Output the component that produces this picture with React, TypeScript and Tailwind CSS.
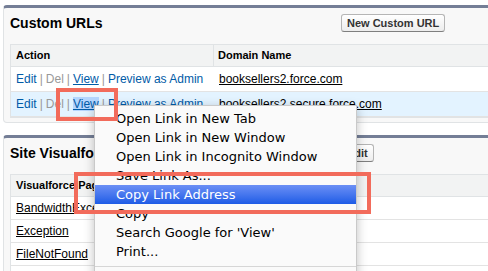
import React from 'react'

const linkCls = 'text-[#015ba7]'

function Pipe() {
  return <span className="text-[#999] px-[3px]">|</span>
}

function ActionLinks({ selected = false }: { selected?: boolean }) {
  return (
    <span className="whitespace-nowrap">
      <span className={linkCls}>Edit</span>
      <Pipe />
      <span className="text-[#999]">Del</span>
      <Pipe />
      <span className={`${linkCls} underline ${selected ? 'bg-[#b4d5fe]' : ''}`}>View</span>
      <Pipe />
      <span className={linkCls}>Preview as Admin</span>
    </span>
  )
}

function Button({ label }: { label: string }) {
  return (
    <button className="h-[18px] px-[5px] rounded-[3px] border border-[#b5b5b5] border-b-[#7f7f7f] bg-gradient-to-b from-white to-[#ededed] text-[11px] font-bold text-[#333] leading-none">
      {label}
    </button>
  )
}

function Panel({ title, button, children }: { title: string; button: string; children: React.ReactNode }) {
  return (
    <div className="ml-[3px] w-[560px] rounded-[4px] border border-[#e0e3e5] border-t-[3px] border-t-[#747e96] bg-[#f8f8f8] px-[6px] pb-[4px]">
      <div className="flex items-center h-[36px] pb-[6px]">
        <div className="w-[331px] text-[14px] font-bold text-black">{title}</div>
        <Button label={button} />
      </div>
      {children}
    </div>
  )
}

const menuItems = [
  'Open Link in New Tab',
  'Open Link in New Window',
  'Open Link in Incognito Window',
  'Save Link As...',
  'Copy Link Address',
  'Copy',
  "Search Google for 'View'",
  'Print...',
]

export default function App() {
  return (
    <div
      className="relative w-[488px] h-[271px] overflow-hidden bg-white text-[12px]"
      style={{ fontFamily: 'Arial, "Liberation Sans", sans-serif' }}
    >
      <div className="pt-[5px]">
        {/* Custom URLs */}
        <Panel title="Custom URLs" button="New Custom URL">
          <div className="border border-[#e0e3e5] bg-white">
            <div className="flex h-[22px] items-center bg-[#f2f3f3] border-b border-[#e0e3e5] text-[11px] font-bold text-black">
              <div className="w-[203px] h-full flex items-center pl-[5px] border-r border-[#e0e3e5]">Action</div>
              <div className="pl-[4px]">Domain Name</div>
            </div>
            <div className="flex h-[25px] items-center border-b border-[#e3e3e3]">
              <div className="w-[203px] pl-[5px]">
                <ActionLinks />
              </div>
              <div className="pl-[5px] text-black underline">booksellers2.force.com</div>
            </div>
            <div className="flex h-[25px] items-center border-b border-[#e3e3e3] bg-[#e3f3ff]">
              <div className="w-[203px] pl-[5px]">
                <ActionLinks selected />
              </div>
              <div className="pl-[5px] text-black underline">booksellers2.secure.force.com</div>
            </div>
          </div>
        </Panel>

        <div className="h-[12px]" />

        {/* Site Visualforce Pages */}
        <Panel title="Site Visualforce Pages" button="Edit">
          <div className="border border-[#e0e3e5] bg-white">
            <div className="flex h-[22px] items-center bg-[#f2f3f3] border-b border-[#e0e3e5] text-[11px] font-bold text-black">
              <div className="w-[203px] h-full flex items-center pl-[5px] border-r border-[#e0e3e5]">Visualforce Page</div>
              <div className="pl-[4px]">Profile</div>
            </div>
            {['BandwidthExceeded', 'Exception', 'FileNotFound', ''].map((name, i) => (
              <div key={i} className="flex h-[23px] items-center border-b border-[#e3e3e3]">
                <div className="pl-[5px] text-black underline">{name}</div>
              </div>
            ))}
          </div>
        </Panel>
      </div>

      {/* context menu */}
      <div
        className="absolute left-[94px] top-[105px] w-[263px] h-[200px] bg-[#fafafa] border border-[#c9c9c9] shadow-[0_3px_10px_rgba(0,0,0,0.25)] pt-[3px] text-[13px] text-black"
        style={{ fontFamily: '"DejaVu Sans", sans-serif' }}
      >
        {menuItems.map((item) => (
          <div
            key={item}
            className={`h-[19px] flex items-center pl-[21px] whitespace-nowrap ${
              item === 'Copy Link Address' ? 'bg-gradient-to-b from-[#6b8ff5] to-[#1c5be6] text-white' : ''
            }`}
          >
            {item}
          </div>
        ))}
        <div className="mt-[5px] border-t border-[#d6d6d6]" />
      </div>

      {/* annotations */}
      <div className="absolute left-[56px] top-[88px] w-[62px] h-[33px] border-4 border-[#f26b5b]" />
      <div className="absolute left-[74px] top-[172px] w-[297px] h-[42px] border-4 border-[#f26b5b]" />
    </div>
  )
}
